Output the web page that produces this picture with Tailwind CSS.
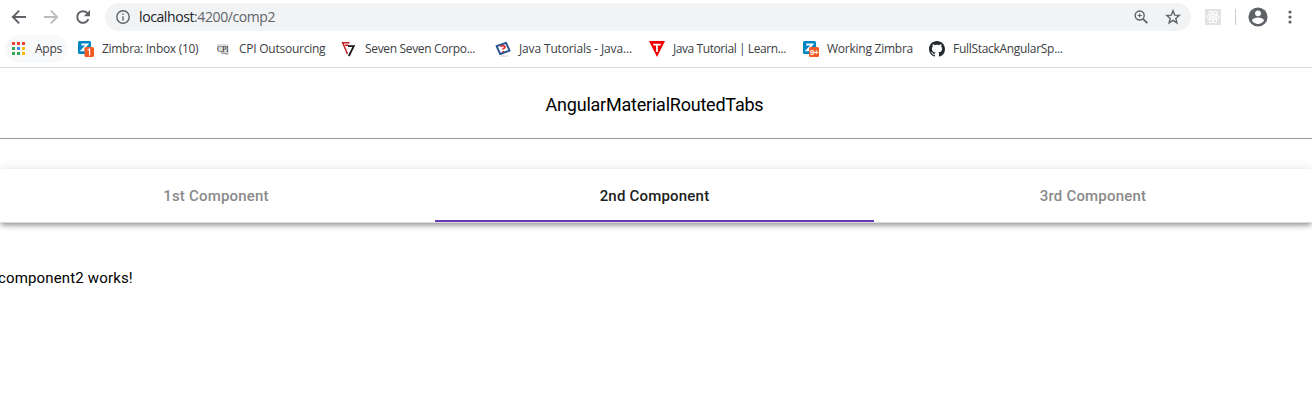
<!DOCTYPE html>
<html lang="en">
<head>
<meta charset="utf-8">
<title>AngularMaterialRoutedTabs</title>
<script src="https://cdn.jsdelivr.net/npm/@tailwindcss/browser@4"></script>
</head>
<body class="h-[409px] overflow-hidden bg-white">
<header class="h-[68px] border-b border-[#dadce0] font-['Open_Sans',sans-serif]">
  <div class="flex h-[34px] items-center">
    <div class="flex w-[105px] items-center gap-2 pl-[7px] text-[#5f6368]">
      <svg class="size-6" viewBox="0 0 24 24" fill="none" stroke="#5f6368" stroke-width="1.9"><path d="M19 12H6M12.2 5.6 5.8 12l6.4 6.4"/></svg>
      <svg class="size-6" viewBox="0 0 24 24" fill="none" stroke="#babcbe" stroke-width="1.9"><path d="M5 12h13M11.8 5.6l6.4 6.4-6.4 6.4"/></svg>
      <svg class="size-6" viewBox="0 0 24 24" fill="none" stroke="#5f6368" stroke-width="2"><path d="M17.4 14.2a5.8 5.8 0 1 1-1.2-6.2l2 2"/><path d="M19 5v6.2h-6.2z" fill="#5f6368" stroke="none"/></svg>
    </div>
    <div class="flex h-7 w-[1086px] items-center rounded-full bg-[#f1f3f4] pl-[11px] pr-[10px]">
      <svg class="size-[14px]" viewBox="0 0 14 14" fill="none" stroke="#5f6368" stroke-width="1.4"><circle cx="7" cy="7" r="6.2"/><path d="M7 6.2v4.2M7 3.5v1.5"/></svg>
      <span class="ml-[9px] text-[14px] leading-5 tracking-[-0.4px] text-[#5f6368]"><span class="text-[#202124]">localhost</span>:4200/comp2</span>
      <svg class="ml-auto size-4" viewBox="0 0 16 16" fill="none" stroke="#5f6368" stroke-width="1.4"><circle cx="6.7" cy="6.5" r="4.5"/><path d="m10 9.8 4.3 4.3" stroke-width="1.8"/><path d="M6.7 4.4v4.2M4.6 6.5h4.2" stroke-width="1.1"/></svg>
      <svg class="ml-4 size-4" viewBox="0 0 16 16" fill="none" stroke="#5f6368" stroke-width="1.4"><path d="m8 1.8 1.7 4.3 4.6.3-3.5 3 1.1 4.5L8 11.4l-3.900 2.500 1.100-4.500-3.500-3 4.600-.300z"/></svg>
    </div>
    <svg class="ml-[14px] size-4" viewBox="0 0 16 16" fill="none"><path fill="#e2e2e2" d="M0 0h16v16H0z"/><g stroke="#fff" stroke-width="1"><ellipse cx="8" cy="8" rx="6.3" ry="2.5"/><ellipse cx="8" cy="8" rx="6.3" ry="2.5" transform="rotate(60 8 8)"/><ellipse cx="8" cy="8" rx="6.3" ry="2.5" transform="rotate(120 8 8)"/></g><circle cx="8" cy="8" r="1.3" fill="#fff"/></svg>
    <div class="ml-[14px] h-4 w-px bg-[#c9cbce]"></div>
    <svg class="ml-[12px] size-5" viewBox="0 0 20 20"><circle cx="10" cy="10" r="9.6" fill="#5f6368"/><circle cx="10" cy="6.3" r="2.9" fill="#fff"/><path fill="#fff" d="M4 13.7c0-2 4-3.1 6-3.1s6 1.1 6 3.1c-1.3 2-3.6 3.2-6 3.2s-4.700-1.200-6-3.200z"/></svg>
    <svg class="ml-[20px] h-4 w-1" viewBox="0 0 4 16" fill="#5f6368"><circle cx="2" cy="3" r="1.600"/><circle cx="2" cy="8" r="1.600"/><circle cx="2" cy="13" r="1.600"/></svg>
  </div>
  <nav class="flex h-[30px] items-center text-[12px] leading-4 tracking-[-0.25px] whitespace-nowrap text-[#3c4043]">
    <div class="ml-[5px] flex h-7 w-[63px] items-center rounded-full bg-[#f8f9fa] pl-[7px]">
      <svg class="mr-[9px] size-[14px]" viewBox="0 0 14 14"><path fill="#ea4335" d="M0 0h3v3H0zM5 0h3v3H5zM10 0h3v3h-3z"/><path fill="#34a853" d="M0 5h3v3H0zM0 10h3v3H0zM5 10h3v3H5z"/><path fill="#4285f4" d="M5 5h3v3H5z"/><path fill="#fbbc05" d="M10 5h3v3h-3zM10 10h3v3h-3z"/></svg>
      <span>Apps</span>
    </div>
    <div class="ml-[10px] flex w-[137px] items-center gap-2">
      <svg class="size-4 shrink-0" viewBox="0 0 16 16"><rect width="13" height="13" rx="1.500" fill="#0087c3"/><path d="M3.300 3.500h6L3.800 9.300h6" fill="none" stroke="#fff" stroke-width="1.800"/><rect x="6.500" y="6" width="9.500" height="10" rx="1.500" fill="#f15a24"/><path d="M9.600 9.300l2-1.300v6.500" fill="none" stroke="#fff" stroke-width="1.200"/></svg>
      <span class="tracking-[-0.3px]">Zimbra: Inbox (10)</span>
    </div>
    <div class="flex w-[126px] items-center gap-2">
      <svg class="size-4 shrink-0" viewBox="0 0 16 16"><path d="M2 3h11l1 11-8-2-4-4z" fill="#dedede"/><text x="2" y="10.500" font-family="Liberation Serif, serif" font-size="9" textLength="11.500" lengthAdjust="spacingAndGlyphs" fill="#222">CPI</text><path d="M6 12l7 1" stroke="#888"/></svg>
      <span>CPI Outsourcing</span>
    </div>
    <div class="flex w-[154px] items-center gap-2">
      <svg class="size-4 shrink-0" viewBox="0 0 16 16" fill="none"><path d="M8.500 1.700H1.700L6.500 13M4 4.200h3.500" stroke="#c62027" stroke-width="1.500"/><path d="M7 5.200h5.800L7.800 15" stroke="#181818" stroke-width="1.800"/></svg>
      <span class="tracking-[-0.33px]">Seven Seven Corpo...</span>
    </div>
    <div class="flex w-[154px] items-center gap-2">
      <svg class="size-4 shrink-0" viewBox="0 0 16 16"><ellipse cx="9" cy="15" rx="5" ry=".8" fill="#ddd"/><path d="M1.600 5.200 11 1.800 14.600 9.600 5.200 13z" fill="#fff" stroke="#24528e" stroke-width="1.900" stroke-linejoin="round"/><path d="M5.800 6c.7-2 4.300-1.700 4.200.1-.1 1.300-2.100 1-2.100 2.400M8.200 10v1.300" fill="none" stroke="#e02a2a" stroke-width="1.600"/></svg>
      <span class="tracking-[-0.15px]">Java Tutorials - Java...</span>
    </div>
    <div class="flex w-[154px] items-center gap-2">
      <svg class="size-4 shrink-0" viewBox="0 0 16 16"><path d="M0 0h16L8 16z" fill="#f50000"/><path d="M4.300 3.700h7.400M8 3v8" stroke="#fff" stroke-width="1.800"/></svg>
      <span class="tracking-[-0.42px]">Java Tutorial | Learn...</span>
    </div>
    <div class="flex w-[126px] items-center gap-2">
      <svg class="size-4 shrink-0" viewBox="0 0 16 16"><rect width="13" height="13" rx="1.500" fill="#0087c3"/><path d="M3.300 3.500h6L3.800 9.300h6" fill="none" stroke="#fff" stroke-width="1.800"/><rect x="6" y="6" width="10" height="10" rx="1.500" fill="#f15a24"/><text x="6.700" y="13.500" font-family="Liberation Sans, sans-serif" font-size="7.500" font-weight="700" textLength="9" lengthAdjust="spacingAndGlyphs" fill="#fff">9+</text></svg>
      <span>Working Zimbra</span>
    </div>
    <div class="flex items-center gap-2">
      <svg class="size-4 shrink-0" viewBox="0 0 16 16" fill="#24292e"><path d="M8 0C3.580 0 0 3.580 0 8c0 3.540 2.290 6.530 5.470 7.590.4.070.55-.17.55-.38 0-.19-.01-.82-.01-1.490-2.010.37-2.530-.49-2.690-.94-.09-.23-.48-.94-.82-1.130-.28-.15-.68-.52-.01-.53.63-.01 1.080.58 1.230.82.72 1.210 1.870.87 2.330.66.070-.52.28-.87.51-1.070-1.780-.2-3.640-.89-3.640-3.950 0-.87.31-1.590.82-2.150-.08-.2-.36-1.020.08-2.120 0 0 .67-.21 2.200.82.64-.18 1.320-.27 2-.27s1.360.09 2 .27c1.530-1.040 2.200-.82 2.200-.82.44 1.100.16 1.920.08 2.120.51.56.82 1.270.82 2.150 0 3.070-1.870 3.750-3.650 3.950.29.25.54.73.54 1.480 0 1.070-.01 1.930-.01 2.200 0 .21.15.46.55.38A8 8 0 0 0 16 8c0-4.420-3.580-8-8-8z"/></svg>
      <span class="tracking-[-0.3px]">FullStackAngularSp...</span>
    </div>
  </nav>
</header>
<main class="font-[Roboto,sans-serif] text-black">
  <h1 class="flex h-[71px] items-center justify-center border-b border-[#999] pt-[3px] pr-[3px] text-[18px] leading-6 tracking-[-0.22px]">AngularMaterialRoutedTabs</h1>
  <nav class="mt-[30px] flex h-[54px] border-b border-[#dcdcdc] bg-white text-[15px] font-medium tracking-[0.2px] shadow-[0_3px_5px_-1px_rgba(0,0,0,0.38),0_1px_10px_0_rgba(0,0,0,0.12)]">
    <a class="flex w-[435px] items-center justify-center pr-[3px] pt-px text-[#8a8a8a]">1st Component</a>
    <a class="flex w-[439px] items-center justify-center border-b-2 border-[#673ab7] pt-[3px] text-[#212121]">2nd Component</a>
    <a class="flex w-[438px] items-center justify-center pt-px text-[#8a8a8a]">3rd Component</a>
  </nav>
  <p class="-ml-[2px] mt-[45px] text-[15px] leading-5 tracking-[0.15px]">component2 works!</p>
</main>
</body>
</html>
